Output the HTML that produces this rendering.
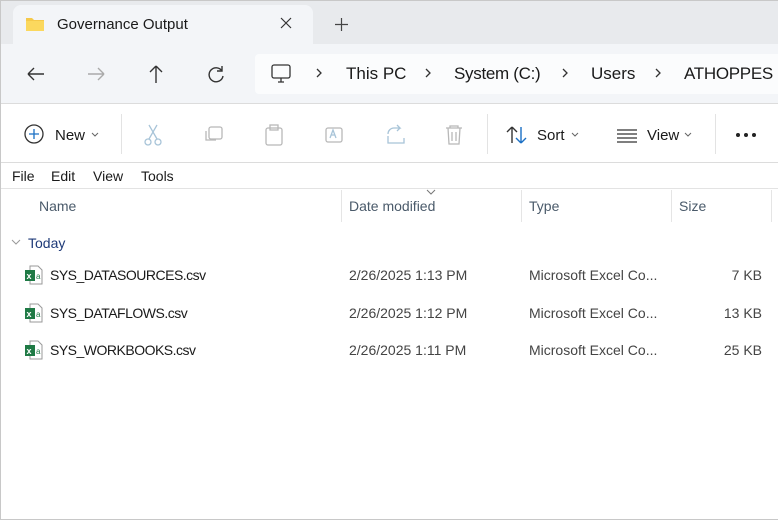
<!DOCTYPE html>
<html><head><style>
*{margin:0;padding:0;box-sizing:border-box}
body{width:778px;height:520px;overflow:hidden;font-family:"Liberation Sans",sans-serif;font-size:14px;color:#1a1a1a;background:#fff;position:relative}
.abs{position:absolute}
.frame{position:absolute;left:0;top:0;width:778px;height:520px;border:1px solid #c8c8c8;border-right:none;pointer-events:none}
.fn{letter-spacing:-0.5px}
</style></head><body>
<div class="abs" style="left:0;top:0;width:778px;height:44px;background:#e8eaed"></div>
<div class="abs" style="left:13px;top:5px;width:300px;height:40px;background:#f3f5f8;border-radius:8px 8px 0 0"></div>
<svg class="abs" style="left:25px;top:16px" width="20" height="16"><path d="M1 2h6l2 2h10v11H1z" fill="#f5c94a"/><path d="M1 5h18v10H1z" fill="#fbd85e"/></svg>
<div class="abs" style="left:57px;top:16px;font-size:15px">Governance Output</div>
<svg class="abs" style="left:280px;top:17px" width="12" height="12" stroke="#333" stroke-width="1.2"><path d="M1 1l10 10M11 1L1 11"/></svg>
<svg class="abs" style="left:335px;top:18px" width="13" height="13" stroke="#444" stroke-width="1.2"><path d="M6.5 0v13M0 6.5h13"/></svg>
<div class="abs" style="left:0;top:44px;width:778px;height:60px;background:#f3f5f8;border-bottom:1px solid #dcdcdc"></div>
<svg class="abs" style="left:24px;top:62px" width="140" height="24" fill="none" stroke-width="1.4">
<path d="M4 12h16M4 12l6-6M4 12l6 6" stroke="#333"/>
<path d="M64 12h16M80 12l-6-6M80 12l-6 6" stroke="#aaa"/>
<path d="M132 4v17M132 4l-6 6M132 4l6 6" stroke="#333"/>
</svg>
<svg class="abs" style="left:205px;top:63px" width="22" height="22" fill="none" stroke="#333" stroke-width="1.4"><path d="M17 8a7 7 0 1 0 1 5"/><path d="M17 3v5h-5"/></svg>
<div class="abs" style="left:255px;top:54px;width:523px;height:40px;background:#fbfcfd;border-radius:4px 0 0 4px"></div>
<svg class="abs" style="left:270px;top:62px" width="24" height="24" fill="none" stroke="#333" stroke-width="1.3"><rect x="2" y="3" width="18" height="13" rx="2"/><path d="M8 20h6M11 16v4"/></svg>
<svg class="abs" style="left:0;top:0" width="778" height="100" fill="none" stroke="#333" stroke-width="1.3"><path d="M317 69l4 4-4 4M426 69l4 4-4 4M563 69l4 4-4 4M656 69l4 4-4 4"/></svg>
<div class="abs" style="left:346px;top:64px;font-size:17px;white-space:nowrap">This PC</div>
<div class="abs" style="left:454px;top:64px;font-size:17px;white-space:nowrap;letter-spacing:-0.3px">System (C:)</div>
<div class="abs" style="left:591px;top:64px;font-size:17px">Users</div>
<div class="abs" style="left:684px;top:64px;font-size:17px;white-space:nowrap;letter-spacing:-0.3px">ATHOPPES</div>
<!-- toolbar -->
<svg class="abs" style="left:24px;top:124px" width="22" height="22" fill="none" stroke-width="1.3"><circle cx="10" cy="10" r="9" stroke="#333"/><path d="M10 5v10M5 10h10" stroke="#1a6fc4"/></svg>
<div class="abs" style="left:55px;top:127px;font-size:15px">New</div>
<svg class="abs" style="left:0;top:0" width="778" height="150" fill="none" stroke="#666" stroke-width="1"><path d="M92 133l3 3 3-3M572 133l3 3 3-3M685 133l3 3 3-3"/></svg>
<div class="abs" style="left:121px;top:114px;width:1px;height:40px;background:#e3e3e3"></div>
<svg class="abs" style="left:140px;top:122px" width="340" height="26" fill="none" stroke="#a8c4d8" stroke-width="1.3">
<circle cx="8" cy="20" r="3"/><circle cx="18" cy="20" r="3"/><path d="M9 17L17 3M17 17L9 3"/>
<rect x="69" y="5" width="13" height="12" rx="2" stroke="#b8b8b8"/><path d="M66 9v9h10" stroke="#b8b8b8"/>
<rect x="126" y="6" width="16" height="17" rx="2" stroke="#b8b8b8"/><rect x="130" y="3" width="8" height="5" stroke="#b8b8b8"/>
<rect x="186" y="6" width="16" height="14" rx="2" stroke="#b8b8b8"/><path d="M190 16l3-8 3 8M191 13h4"/>
<path d="M248 12a6 6 0 0 1 6-6h6l-3-3M260 6l-3 3M248 14v7h16v-5" stroke="#a8c4d8"/>
<path d="M306 6h16M310 6v-2h8v2M308 6l1 16h10l1-16M312 10v9M316 10v9" stroke="#b8b8b8"/>
</svg>
<div class="abs" style="left:487px;top:114px;width:1px;height:40px;background:#e3e3e3"></div>
<svg class="abs" style="left:506px;top:125px" width="24" height="20" fill="none" stroke-width="1.4"><path d="M6 18V2M6 2L1 7M6 2l5 5" stroke="#333"/><path d="M15 2v16M15 18l-5-5M15 18l5-5" stroke="#1a6fc4"/></svg>
<div class="abs" style="left:537px;top:127px;font-size:15px">Sort</div>
<svg class="abs" style="left:616px;top:128px" width="22" height="16" stroke="#333" stroke-width="1.2"><path d="M1 2h20M1 6h20M1 10h20M1 14h20"/></svg>
<div class="abs" style="left:647px;top:127px;font-size:15px">View</div>
<div class="abs" style="left:715px;top:114px;width:1px;height:40px;background:#e3e3e3"></div>
<svg class="abs" style="left:735px;top:131px" width="24" height="8" fill="#222"><circle cx="3" cy="4" r="2"/><circle cx="11" cy="4" r="2"/><circle cx="19" cy="4" r="2"/></svg>
<div class="abs" style="left:0;top:162px;width:778px;height:1px;background:#dcdcdc"></div>
<div class="abs" style="left:12px;top:168px;font-size:14px">File</div>
<div class="abs" style="left:51px;top:168px;font-size:14px">Edit</div>
<div class="abs" style="left:93px;top:168px;font-size:14px">View</div>
<div class="abs" style="left:141px;top:168px;font-size:14px">Tools</div>
<div class="abs" style="left:0;top:188px;width:778px;height:1px;background:#e3e3e3"></div>
<!-- headers -->
<div class="abs" style="left:39px;top:198px;color:#4a5a6a;font-size:14px">Name</div>
<div class="abs" style="left:341px;top:190px;width:1px;height:32px;background:#e5e5e5"></div>
<svg class="abs" style="left:0;top:0" width="778" height="250" fill="none" stroke="#777" stroke-width="1"><path d="M427 190l4 4 4-4"/><path d="M12 240l4 4 4-4" stroke="#999"/></svg>
<div class="abs" style="left:349px;top:198px;color:#4a5a6a;font-size:14px">Date modified</div>
<div class="abs" style="left:521px;top:190px;width:1px;height:32px;background:#e5e5e5"></div>
<div class="abs" style="left:529px;top:198px;color:#4a5a6a;font-size:14px">Type</div>
<div class="abs" style="left:671px;top:190px;width:1px;height:32px;background:#e5e5e5"></div>
<div class="abs" style="left:679px;top:198px;color:#4a5a6a;font-size:14px">Size</div>
<div class="abs" style="left:771px;top:190px;width:1px;height:32px;background:#e5e5e5"></div>
<div class="abs" style="left:28px;top:235px;color:#1e3a78;font-size:14px">Today</div>
<!-- rows -->
<div class="abs" style="left:0;top:264px;width:778px;font-size:14px">
 <div style="position:relative;height:37.5px">
  <svg class="abs" style="left:24px;top:1px" width="20" height="20"><path d="M6 1h8l4 4v14H6z" fill="#fff" stroke="#999"/><rect x="1" y="5" width="10" height="11" fill="#1f7a45"/><text x="2.5" y="14" font-size="9" fill="#fff" font-family="Liberation Sans" font-weight="bold">x</text><text x="12" y="14" font-size="8" fill="#1f7a45" font-family="Liberation Sans">a</text></svg>
  <span class="abs fn" style="left:50px;top:3px">SYS_DATASOURCES.csv</span>
  <span class="abs" style="left:349px;top:3px;color:#444">2/26/2025 1:13 PM</span>
  <span class="abs" style="left:529px;top:3px;color:#444">Microsoft Excel Co...</span>
  <span class="abs" style="right:16px;top:3px;color:#444">7 KB</span>
 </div>
 <div style="position:relative;height:37.5px">
  <svg class="abs" style="left:24px;top:1px" width="20" height="20"><path d="M6 1h8l4 4v14H6z" fill="#fff" stroke="#999"/><rect x="1" y="5" width="10" height="11" fill="#1f7a45"/><text x="2.5" y="14" font-size="9" fill="#fff" font-family="Liberation Sans" font-weight="bold">x</text><text x="12" y="14" font-size="8" fill="#1f7a45" font-family="Liberation Sans">a</text></svg>
  <span class="abs fn" style="left:50px;top:3px">SYS_DATAFLOWS.csv</span>
  <span class="abs" style="left:349px;top:3px;color:#444">2/26/2025 1:12 PM</span>
  <span class="abs" style="left:529px;top:3px;color:#444">Microsoft Excel Co...</span>
  <span class="abs" style="right:16px;top:3px;color:#444">13 KB</span>
 </div>
 <div style="position:relative;height:37.5px">
  <svg class="abs" style="left:24px;top:1px" width="20" height="20"><path d="M6 1h8l4 4v14H6z" fill="#fff" stroke="#999"/><rect x="1" y="5" width="10" height="11" fill="#1f7a45"/><text x="2.5" y="14" font-size="9" fill="#fff" font-family="Liberation Sans" font-weight="bold">x</text><text x="12" y="14" font-size="8" fill="#1f7a45" font-family="Liberation Sans">a</text></svg>
  <span class="abs fn" style="left:50px;top:3px">SYS_WORKBOOKS.csv</span>
  <span class="abs" style="left:349px;top:3px;color:#444">2/26/2025 1:11 PM</span>
  <span class="abs" style="left:529px;top:3px;color:#444">Microsoft Excel Co...</span>
  <span class="abs" style="right:16px;top:3px;color:#444">25 KB</span>
 </div>
</div>
<div class="frame"></div>
</body></html>
